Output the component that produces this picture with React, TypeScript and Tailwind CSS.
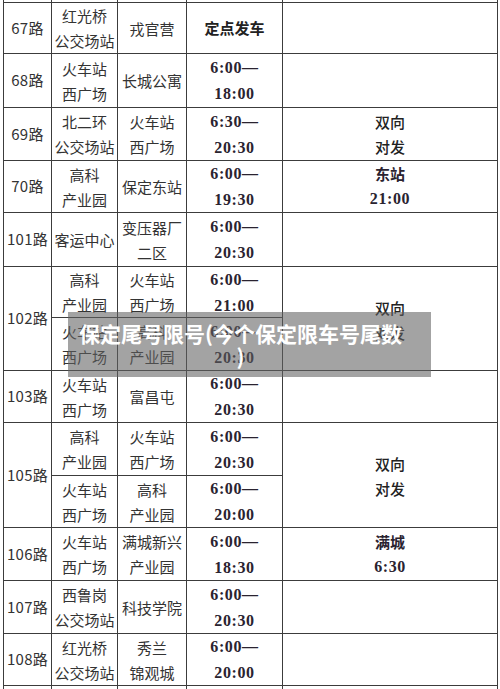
import React from 'react';

const cn = '[font-family:"Noto_Sans_CJK_SC",sans-serif]';

// one line of the timetable = two time strings "6:00—" / "20:30"
const rows: { r: number; route?: string; span?: number; a: string[]; b: string[]; t: string[] }[] = [
    { r: 2, route: '67路', a: ['红光桥', '公交场站'], b: ['戎官营'], t: [] },
    { r: 3, route: '68路', a: ['火车站', '西广场'], b: ['长城公寓'], t: ['6:00—', '18:00'] },
    { r: 4, route: '69路', a: ['北二环', '公交场站'], b: ['火车站', '西广场'], t: ['6:30—', '20:30'] },
    { r: 5, route: '70路', a: ['高科', '产业园'], b: ['保定东站'], t: ['6:00—', '19:30'] },
    { r: 6, route: '101路', a: ['客运中心'], b: ['变压器厂', '二区'], t: ['6:00—', '20:30'] },
    { r: 7, route: '102路', span: 2, a: ['高科', '产业园'], b: ['火车站', '西广场'], t: ['6:00—', '21:00'] },
    { r: 8, a: ['火车站', '西广场'], b: ['高科', '产业园'], t: ['6:00—', '20:30'] },
    { r: 9, route: '103路', a: ['火车站', '西广场'], b: ['富昌屯'], t: ['6:00—', '20:30'] },
    { r: 10, route: '105路', span: 2, a: ['高科', '产业园'], b: ['火车站', '西广场'], t: ['6:00—', '20:30'] },
    { r: 11, a: ['火车站', '西广场'], b: ['高科', '产业园'], t: ['6:00—', '20:00'] },
    { r: 12, route: '106路', a: ['火车站', '西广场'], b: ['满城新兴', '产业园'], t: ['6:00—', '18:30'] },
    { r: 13, route: '107路', a: ['西鲁岗', '公交场站'], b: ['科技学院'], t: ['6:00—', '20:30'] },
    { r: 14, route: '108路', a: ['红光桥', '公交场站'], b: ['秀兰', '锦观城'], t: ['6:00—', '20:00'] },
];

const rowStart: Record<number, string> = {
    2: 'row-start-2', 3: 'row-start-3', 4: 'row-start-4', 5: 'row-start-5', 6: 'row-start-6',
    7: 'row-start-7', 8: 'row-start-8', 9: 'row-start-9', 10: 'row-start-10', 11: 'row-start-11',
    12: 'row-start-12', 13: 'row-start-13', 14: 'row-start-14', 15: 'row-start-15',
};

const Box: React.FC<{ className: string; children?: React.ReactNode }> = ({ className, children }) => (
    <div className={`bg-white flex flex-col items-center justify-center text-center ${className}`}>{children}</div>
);

const StopText: React.FC<{ lines: string[] }> = ({ lines }) => (
    <div className={`${cn} text-[15px] leading-[25px] text-[#333] whitespace-nowrap`}>
        {lines.map((l) => (
            <div key={l}>{l}</div>
        ))}
    </div>
);

const TimeText: React.FC<{ lines: string[] }> = ({ lines }) => (
    <div className='[font-family:"Liberation_Serif",serif] font-bold text-[16px] leading-[26px] tracking-[0.6px] text-[#2a2330] pt-[1px]'>
        {lines.map((l) => (
            <div key={l}>{l}</div>
        ))}
    </div>
);

const Both: React.FC<{ extra?: string }> = ({ extra = '' }) => (
    <div className={`${cn} text-[15px] leading-[25px] text-[#222] font-medium ${extra}`}>
        <div>双向</div>
        <div>对发</div>
    </div>
);

export default function App() {
    return (
        <div className="relative w-[500px] h-[689px] overflow-hidden bg-white">
            {/* timetable grid; the dark background shows through the 1px gaps as rules */}
            <div className="ml-[3px] w-[495px] grid gap-[1px] bg-[#3c3c3c] px-[1px] grid-cols-[47px_65px_68px_95px_214px] grid-rows-[2px_50px_53px_52px_51px_53px_50px_52px_51px_52px_51px_52px_52px_51px_10px]">
                {/* sliver of the previous row */}
                <Box className="row-start-1 col-start-1"> </Box>
                <Box className="row-start-1 col-start-2"> </Box>
                <Box className="row-start-1 col-start-3"> </Box>
                <Box className="row-start-1 col-start-4"> </Box>
                <Box className="row-start-1 col-start-5"> </Box>

                {rows.map((row) => (
                    <React.Fragment key={row.r}>
                        {row.route && (
                            <Box className={`col-start-1 ${rowStart[row.r]} ${row.span === 2 ? 'row-span-2' : ''}`}>
                                <span className={`${cn} text-[15px] text-[#333] tracking-[0.3px]`}>{row.route}</span>
                            </Box>
                        )}
                        <Box className={`col-start-2 ${rowStart[row.r]}`}>
                            <StopText lines={row.a} />
                        </Box>
                        <Box className={`col-start-3 ${rowStart[row.r]}`}>
                            <StopText lines={row.b} />
                        </Box>
                        <Box className={`col-start-4 ${rowStart[row.r]}`}>
                            {row.t.length ? (
                                <TimeText lines={row.t} />
                            ) : (
                                <span className={`${cn} font-bold text-[15px] text-[#222]`}>定点发车</span>
                            )}
                        </Box>
                    </React.Fragment>
                ))}

                {/* direction / note column */}
                <Box className="col-start-5 row-start-2"> </Box>
                <Box className="col-start-5 row-start-3"> </Box>
                <Box className="col-start-5 row-start-4">
                    <Both />
                </Box>
                <Box className="col-start-5 row-start-5">
                    <div className={`${cn} font-bold text-[15px] leading-[25px] text-[#2a2330]`}>东站</div>
                    <div className='[font-family:"Liberation_Serif",serif] font-bold text-[16px] leading-[26px] tracking-[0.6px] text-[#2a2330]'>21:00</div>
                </Box>
                <Box className="col-start-5 row-start-6"> </Box>
                <Box className="col-start-5 row-start-7 row-span-2">
                    <Both extra="pt-[2px]" />
                </Box>
                <Box className="col-start-5 row-start-9"> </Box>
                <Box className="col-start-5 row-start-10 row-span-2">
                    <Both extra="pt-[2px]" />
                </Box>
                <Box className="col-start-5 row-start-12">
                    <div className={`${cn} font-bold text-[15px] leading-[25px] text-[#2a2330]`}>满城</div>
                    <div className='[font-family:"Liberation_Serif",serif] font-bold text-[16px] leading-[26px] tracking-[0.6px] text-[#2a2330]'>6:30</div>
                </Box>
                <Box className="col-start-5 row-start-13"> </Box>
                <Box className="col-start-5 row-start-14"> </Box>

                {/* start of the next row */}
                <Box className="row-start-15 col-start-1"> </Box>
                <Box className="row-start-15 col-start-2"> </Box>
                <Box className="row-start-15 col-start-3"> </Box>
                <Box className="row-start-15 col-start-4"> </Box>
                <Box className="row-start-15 col-start-5"> </Box>
            </div>

            {/* caption banner laid over the table */}
            <div className="absolute left-[68px] top-[312px] w-[363px] h-[65px] bg-[rgba(96,96,96,0.58)] flex flex-col items-center justify-center pr-[18px]">
                <div className={`${cn} font-bold text-[21px] leading-[23px] text-white whitespace-nowrap text-center`}>
                    保定尾号限号(今个保定限车号尾数
                    <br />)
                </div>
            </div>
        </div>
    );
}
